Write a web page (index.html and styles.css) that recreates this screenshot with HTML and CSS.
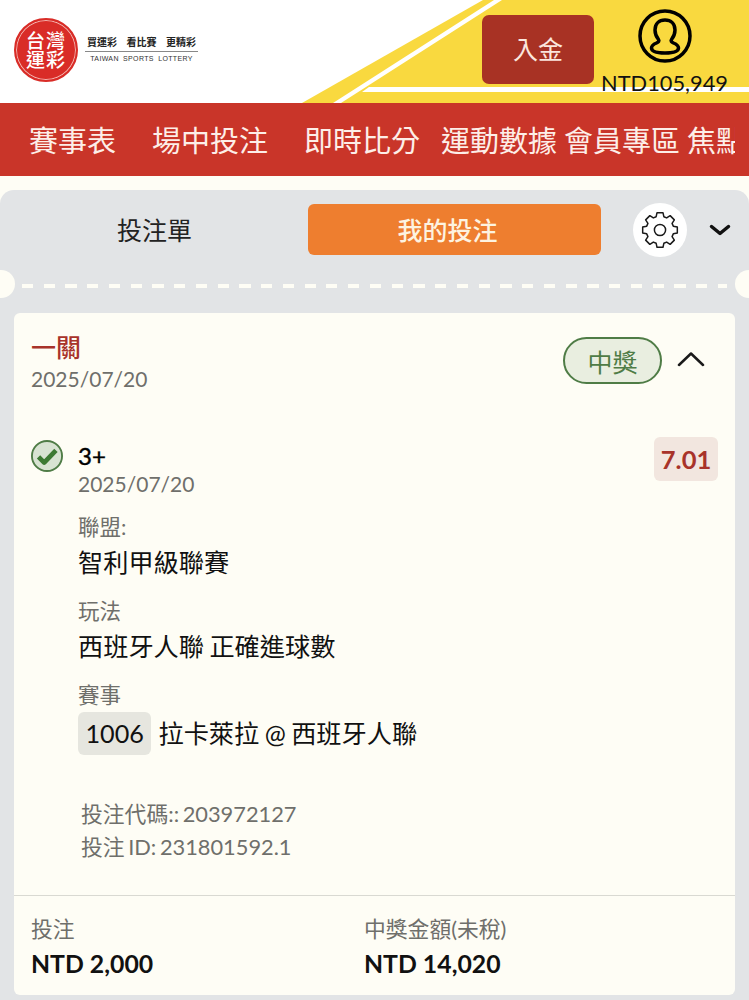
FILE: index.html
```html
<!doctype html>
<html>
    <head>
        <meta charset="UTF-8">
        <meta name="viewport" content="width=device-width, initial-scale=1">
        <title>台灣運彩</title>
        <link rel="stylesheet" href="styles.css">
    </head>
    <body>
        <header class="topbar">
            <svg class="topbar-bg" width="749" height="103" viewBox="0 0 749 103">
                <polygon points="302,103 483,0 749,0 749,103" fill="#f9d93f"/>
                <polygon points="494,0 502,0 341,103 333,103" fill="#fff"/>
                <polygon points="369,87 749,87 749,92 362,92" fill="#fff"/>
            </svg>
            <div class="logo">
                <div class="logo-mark">
                    <span>台灣</span>
                    <span>運彩</span>
                </div>
                <div class="logo-text">
                    <div class="logo-slogan"><span>買運彩</span><span>看比賽</span><span>更精彩</span></div>
                    <div class="logo-en">TAIWAN SPORTS LOTTERY</div>
                </div>
            </div>
            <div class="account">
                <a class="deposit">入金</a>
                <div class="wallet">
                    <svg class="user-icon" width="54" height="54" viewBox="0 0 54 54" fill="none" stroke="#000" stroke-width="3.500">
                        <circle cx="27" cy="27" r="25"/>
                        <path d="M27 11c-6 0-10 4-10 10 0 4 1.500 7 3.500 9.500 1 1.500 0 2.500-2 3.500-3 1.200-5 2.500-5 5 0 3 4 5 13.500 5s13.500-2 13.500-5c0-2.500-2-3.800-5-5-2-1-3-2-2-3.500 2-2.500 3.500-5.500 3.500-9.500 0-6-4-10-10-10z"/>
                    </svg>
                    <div class="balance">NTD105,949</div>
                </div>
            </div>
        </header>

        <nav class="mainnav">
            <div class="mainnav-items">
                <a>賽事表</a>
                <a>場中投注</a>
                <a>即時比分</a>
                <a class="near">運動數據</a>
                <a class="nearer">會員專區</a>
                <a class="nearer">焦點</a>
            </div>
        </nav>

        <main class="betslip">
            <div class="tabs">
                <a class="tab">投注單</a>
                <a class="tab tab-active">我的投注</a>
                <div class="tab-tools">
                    <span class="gear">
                        <svg width="42" height="42" viewBox="0 0 24 24" fill="none" stroke="#1a1a1a" stroke-width=".850" stroke-linejoin="round">
                            <path d="M10.300 3.200h3.400l.5 2.300 1.600.7 2-1.300 2.400 2.400-1.300 2 .7 1.600 2.300.5v3.400l-2.300.5-.7 1.600 1.300 2-2.400 2.400-2-1.300-1.600.7-.5 2.300h-3.400l-.5-2.300-1.600-.7-2 1.300-2.400-2.400 1.300-2-.7-1.600-2.300-.5v-3.400l2.300-.5.7-1.600-1.300-2 2.400-2.400 2 1.300 1.600-.7z" transform="translate(0,-1.100)"/>
                            <circle cx="12" cy="12" r="3.200"/>
                        </svg>
                    </span>
                    <svg class="chevron" width="22" height="12" viewBox="0 0 22 12" fill="none" stroke="#111" stroke-width="3.500" stroke-linecap="round" stroke-linejoin="round">
                        <path d="M2.500 2.500 11 9.500l8.500-7"/>
                    </svg>
                </div>
            </div>

            <div class="perforation">
                <span class="notch notch-left"></span>
                <span class="notch notch-right"></span>
            </div>

            <section class="card">
                <div class="card-head">
                    <div>
                        <div class="bet-type">一關</div>
                        <div class="muted">2025/07/20</div>
                    </div>
                    <div class="card-status">
                        <span class="won-badge">中獎</span>
                        <svg width="32" height="18" viewBox="0 0 32 18" fill="none" stroke="#1a1a1a" stroke-width="2.500" stroke-linecap="round" stroke-linejoin="round">
                            <path d="M4 13 16 1.500 28 13"/>
                        </svg>
                    </div>
                </div>

                <div class="selection">
                    <svg class="check" width="32" height="32" viewBox="0 0 34 34">
                        <circle cx="17" cy="17" r="16" fill="#d8e3d2" stroke="#4f7c46" stroke-width="2"/>
                        <path d="M8 18l6 6L26.500 11" fill="none" stroke="#3d7a33" stroke-width="5" stroke-linejoin="round"/>
                    </svg>
                    <div class="selection-body">
                        <div class="selection-top">
                            <div>
                                <div class="pick">3+</div>
                                <div class="muted">2025/07/20</div>
                            </div>
                            <span class="odds">7.01</span>
                        </div>
                        <div class="field">
                            <div class="label">聯盟:</div>
                            <div class="value">智利甲級聯賽</div>
                        </div>
                        <div class="field">
                            <div class="label">玩法</div>
                            <div class="value">西班牙人聯 正確進球數</div>
                        </div>
                        <div class="field">
                            <div class="label">賽事</div>
                            <div class="value match"><span class="match-no">1006</span>拉卡萊拉 @ 西班牙人聯</div>
                        </div>
                    </div>
                </div>

                <div class="codes">
                    <div>投注代碼:: 203972127</div>
                    <div>投注 ID: 231801592.1</div>
                </div>

                <div class="totals">
                    <div class="total">
                        <div class="label">投注</div>
                        <div class="amount">NTD 2,000</div>
                    </div>
                    <div class="total">
                        <div class="label">中獎金額(未稅)</div>
                        <div class="amount">NTD 14,020</div>
                    </div>
                </div>
            </section>
        </main>
    </body>
</html>
```

FILE: styles.css
```css
:root {
    --cream: #fefdf5;
    --panel: #e2e4e6;
    --red: #c93529;
    --yellow: #f9d93f;
    --muted: #6f6f6b;
}

html, body {
    margin: 0;
    height: 1000px;
    overflow: hidden;
    background-color: var(--cream);
}

* {
    box-sizing: border-box;
    font-family: Lato, "Noto Sans CJK TC", sans-serif;
}

.topbar {
    position: relative;
    height: 103px;
    background-color: #fff;
    display: flex;
    justify-content: space-between;
}

.topbar-bg {
    position: absolute;
    left: 0;
    top: 0;
}

.logo {
    position: relative;
    display: flex;
    align-items: center;
    gap: 7px;
    padding: 18px 0 0 14px;
    height: 82px;
}

.logo-mark {
    width: 64px;
    height: 64px;
    border-radius: 50%;
    background-color: #d92c27;
    color: #fff;
    border: 2px solid #d92c27;
    box-shadow: inset 0 0 0 1px #f3b5b0;
    display: flex;
    flex-direction: column;
    align-items: center;
    justify-content: center;
    font-size: 19px;
    line-height: 19px;
    letter-spacing: 1px;
    font-weight: 500;
}

.logo-text {
    width: 113px;
}

.logo-slogan {
    display: flex;
    justify-content: space-between;
    padding: 0 2px 2px;
    font-size: 10px;
    line-height: 13px;
    font-weight: 700;
    color: #222;
    border-bottom: 1px solid #888;
}

.logo-en {
    font-family: "Liberation Sans", sans-serif;
    font-size: 7px;
    line-height: 13px;
    letter-spacing: .35px;
    word-spacing: 2px;
    text-align: center;
    color: #333;
}

.account {
    position: relative;
    display: flex;
    padding-right: 21px;
}

.deposit {
    width: 112px;
    height: 69px;
    margin: 15px 7px 0 0;
    padding-bottom: 3px;
    border-radius: 7px;
    background-color: #a83224;
    color: #fbe6de;
    font-size: 25px;
    display: flex;
    align-items: center;
    justify-content: center;
}

.wallet {
    display: flex;
    flex-direction: column;
    align-items: center;
    padding-top: 9px;
}

.balance {
    font-size: 21.800px;
    line-height: 24px;
    margin-top: 8px;
    color: #111;
}

.mainnav {
    height: 73px;
    background-color: var(--red);
    padding: 0 14px 0 29px;
}

.mainnav-items {
    height: 100%;
    padding-bottom: 2px;
    color: #fdeee8;
    display: flex;
    align-items: center;
    overflow: hidden;
    white-space: nowrap;
    font-size: 29px;
}

.mainnav a {
    flex: none;
}

.mainnav a + a {
    margin-left: 36px;
}

.mainnav a.near {
    margin-left: 21px;
}

.mainnav a.nearer {
    margin-left: 7px;
}

.betslip {
    margin-top: 14px;
    height: 810px;
    background-color: var(--panel);
    border-radius: 14px 14px 0 0;
    position: relative;
    overflow: hidden;
}

.tabs {
    display: flex;
    align-items: center;
    height: 80px;
    padding: 0 0 1px 15px;
}

.tab {
    width: 279px;
    height: 51px;
    margin-right: 14px;
    padding-bottom: 1px;
    display: flex;
    align-items: center;
    justify-content: center;
    font-size: 25px;
    color: #222;
}

.tab-active {
    width: 293px;
    padding: 0 14px 2px 0;
    border-radius: 6px;
    background-color: #ee7e2f;
    color: #fdf3e0;
    font-weight: 500;
}

.tab-tools {
    display: flex;
    align-items: center;
    gap: 22px;
    margin-left: 18px;
}

.gear {
    width: 54px;
    height: 54px;
    border-radius: 50%;
    background-color: #fff;
    display: flex;
    align-items: center;
    justify-content: center;
}

.chevron {
    margin-top: 1px;
}

.perforation {
    position: relative;
    height: 4px;
    margin: 14px 0 0 22px;
    width: 705px;
    background: repeating-linear-gradient(90deg, var(--cream) 0, var(--cream) 11px, transparent 11px, transparent 21.750px);
}

.notch {
    position: absolute;
    top: -14px;
    width: 28px;
    height: 28px;
    border-radius: 50%;
    background-color: var(--cream);
}

.notch-left {
    left: -35px;
}

.notch-right {
    right: -36px;
}

.card {
    margin: 25px 14px 0;
    height: 682px;
    background-color: var(--cream);
    border-radius: 6px;
    display: flex;
    flex-direction: column;
}

.card-head {
    display: flex;
    justify-content: space-between;
    align-items: flex-start;
    padding: 17px 28px 0 17px;
}

.bet-type {
    font-size: 25px;
    line-height: 35px;
    font-weight: 500;
    color: #a8332a;
}

.muted {
    font-size: 21px;
    line-height: 28px;
    color: var(--muted);
}

.card-status {
    display: flex;
    align-items: center;
    gap: 13px;
    padding-top: 7px;
}

.won-badge {
    width: 99px;
    height: 47px;
    border-radius: 24px;
    border: 2px solid #4f7c46;
    background-color: #e9eee0;
    color: #4f7c46;
    font-size: 25px;
    display: flex;
    align-items: center;
    justify-content: center;
}

.selection {
    display: flex;
    padding: 0 17px;
    margin-top: 47px;
}

.check {
    flex: none;
}

.selection-body {
    flex: 1;
    margin-left: 15px;
    padding-top: 1px;
}

.selection-top {
    display: flex;
    justify-content: space-between;
    align-items: flex-start;
}

.pick {
    font-size: 24px;
    line-height: 29px;
    -webkit-text-stroke: .4px #000;
    color: #000;
}

.odds {
    width: 64px;
    height: 44px;
    margin-top: -4px;
    border-radius: 6px;
    background-color: #f2e6df;
    color: #a8332a;
    font-size: 25.500px;
    font-weight: 700;
    display: flex;
    align-items: center;
    justify-content: center;
}

.field {
    margin-top: 13px;
}

.label {
    font-size: 21.500px;
    line-height: 32px;
    color: var(--muted);
}

.value {
    font-size: 25.200px;
    line-height: 39px;
    word-spacing: -1px;
    color: #111;
}

.match {
    display: flex;
    align-items: center;
    margin-top: 1px;
}

.match-no {
    height: 43px;
    padding: 0 7.500px;
    margin-right: 7px;
    border-radius: 6px;
    background-color: #e6e6df;
    display: flex;
    align-items: center;
}

.codes {
    padding-left: 67px;
    margin-top: 42px;
    font-size: 21.800px;
    line-height: 33px;
    word-spacing: -2px;
    color: var(--muted);
}

.totals {
    margin-top: auto;
    height: 100px;
    border-top: 1px solid #d9d9d2;
    display: flex;
    padding: 16px 0 0 17px;
}

.total {
    width: 333px;
}

.total .label {
    font-size: 21.800px;
    line-height: 33px;
}

.amount {
    font-size: 24.800px;
    line-height: 38px;
    font-weight: 700;
    color: #111;
}
```
